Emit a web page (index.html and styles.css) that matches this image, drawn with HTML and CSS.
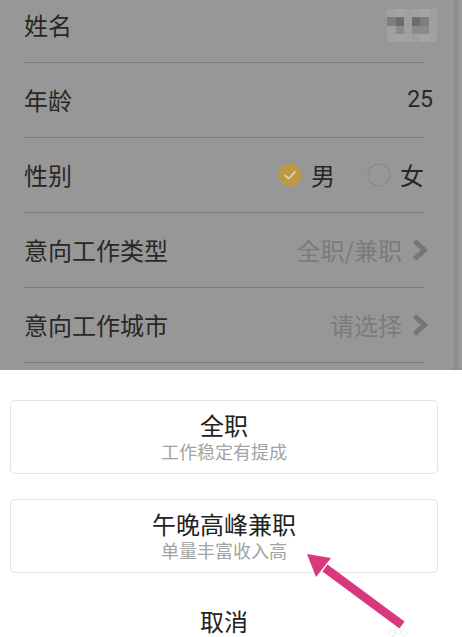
FILE: index.html
```html
<!DOCTYPE html>
<html lang="zh-CN">
<head>
<meta charset="utf-8">
<title>意向工作类型</title>
<link rel="stylesheet" href="styles.css">
</head>
<body>
<div class="screen">
  <section class="list">
    <div class="rows">
      <div class="row">
        <span class="label">姓名</span>
        <div class="blur">
          <i class="c1"></i><i class="c2"></i><i class="c3"></i><i class="c1"></i><i class="c2"></i><i class="c3"></i>
          <i class="d2"></i><i class="d1"></i><i class="c3"></i><i class="d1"></i><i class="d2"></i><i class="c4"></i>
          <i class="c4"></i><i class="d3"></i><i class="c3"></i><i class="d3"></i><i class="d3"></i><i class="c4"></i>
          <i class="c1"></i><i class="c2"></i><i class="c1"></i><i class="c3"></i><i class="c2"></i><i class="c1"></i>
        </div>
      </div>
      <div class="row">
        <span class="label">年龄</span>
        <span class="value num">25</span>
      </div>
      <div class="row">
        <span class="label">性别</span>
        <div class="gender">
          <span class="radio on"><svg viewBox="0 0 24 24" width="24" height="24"><circle cx="12" cy="12" r="11.5" fill="#bb9a43"/><path d="M7 12.3 L10.6 15.6 L17 8.8" fill="none" stroke="#ddd3b4" stroke-width="1.8" stroke-linecap="round" stroke-linejoin="round"/></svg></span>
          <span class="opt">男</span>
          <span class="radio off"><svg viewBox="0 0 24 24" width="24" height="24"><circle cx="12" cy="12" r="11" fill="none" stroke="#898989" stroke-width="1.2"/></svg></span>
          <span class="opt">女</span>
        </div>
      </div>
      <div class="row">
        <span class="label">意向工作类型</span>
        <div class="pick">
          <span class="hint">全职/兼职</span>
          <svg class="chev" viewBox="0 0 16 22" width="16" height="22"><path d="M2.5 2 L12.5 11 L2.5 20" fill="none" stroke="#767676" stroke-width="5"/></svg>
        </div>
      </div>
      <div class="row">
        <span class="label">意向工作城市</span>
        <div class="pick">
          <span class="hint">请选择</span>
          <svg class="chev" viewBox="0 0 16 22" width="16" height="22"><path d="M2.5 2 L12.5 11 L2.5 20" fill="none" stroke="#767676" stroke-width="5"/></svg>
        </div>
      </div>
      <div class="row"></div>
    </div>
    <div class="scrollbar"></div>
  </section>

  <section class="sheet">
    <div class="card">
      <div class="title">全职</div>
      <div class="sub">工作稳定有提成</div>
    </div>
    <div class="card">
      <div class="title">午晚高峰兼职</div>
      <div class="sub">单量丰富收入高</div>
    </div>
    <div class="cancel">取消</div>

    <svg class="arrow" viewBox="0 0 120 90" width="120" height="90">
      <line x1="97" y1="83" x2="20" y2="26" stroke="#d9387f" stroke-width="8.5"/>
      <polygon points="2,12 26,16 11,35" fill="#d9387f"/>
    </svg>
    <svg class="mark" viewBox="0 0 24 12" width="24" height="12">
      <circle cx="6" cy="6" r="3" fill="none" stroke="#ececec" stroke-width="1"/>
      <circle cx="12" cy="4" r="3" fill="none" stroke="#ececec" stroke-width="1"/>
      <circle cx="18" cy="6" r="3" fill="none" stroke="#ececec" stroke-width="1"/>
    </svg>
  </section>
</div>
</body>
</html>
```
FILE: styles.css
```css
html, body {
  margin: 0;
  padding: 0;
  background: #ffffff;
}

body {
  width: 462px;
  height: 637px;
  overflow: hidden;
  font-family: "Noto Sans CJK SC", "Noto Sans", sans-serif;
  color: #262626;
}

.screen {
  display: flex;
  flex-direction: column;
  height: 637px;
}

.list {
  position: relative;
  height: 370px;
  background: #979797;
  overflow: hidden;
  flex: none;
}

.rows {
  margin-top: -12px;
  display: flex;
  flex-direction: column;
}

.row {
  margin: 0 38px 0 24px;
  height: 74px;
  border-bottom: 1px solid #7c7c7c;
  display: flex;
  align-items: center;
  justify-content: space-between;
  flex: none;
}

.label {
  font-size: 24px;
  line-height: 30px;
  color: #272727;
}

.value {
  font-size: 24px;
  line-height: 30px;
  color: #272727;
  margin-right: -9px;
}

.num {
  font-family: "Roboto", "Noto Sans", sans-serif;
  font-size: 23px;
}

.blur {
  display: grid;
  grid-template-columns: repeat(6, 8.3px);
  grid-template-rows: repeat(4, 8.3px);
  margin-right: -13px;
  margin-top: 1px;
  filter: blur(0.6px);
}

.blur i { display: block; }
.blur .c1 { background: #a2a2a2; }
.blur .c2 { background: #a5a5a5; }
.blur .c3 { background: #9f9f9f; }
.blur .c4 { background: #a0a0a0; }
.blur .d1 { background: #6d6d6d; }
.blur .d2 { background: #7e7e7e; }
.blur .d3 { background: #8a8a8a; }

.gender {
  display: flex;
  align-items: center;
}

.radio {
  display: flex;
  width: 24px;
  height: 24px;
}

.opt {
  font-size: 24px;
  line-height: 30px;
  color: #272727;
  margin-left: 9px;
}

.radio.off {
  margin-left: 32px;
}

.pick {
  display: flex;
  align-items: center;
  margin-right: -4px;
}

.hint {
  font-size: 24px;
  line-height: 30px;
  color: #7b7b7b;
}

.chev {
  margin-left: 10px;
  display: block;
}

.scrollbar {
  position: absolute;
  top: 0;
  bottom: 0;
  left: 454px;
  width: 4px;
  background: #8d8d8d;
}

.sheet {
  position: relative;
  flex: 1;
  background: #ffffff;
  padding: 30px 24px 0 10px;
  display: flex;
  flex-direction: column;
}

.card {
  height: 72px;
  border: 1px solid #e3e3e3;
  border-radius: 5px;
  display: flex;
  flex-direction: column;
  align-items: center;
  justify-content: center;
  margin-bottom: 25px;
}

.title {
  font-size: 24px;
  line-height: 26px;
  color: #222222;
}

.sub {
  margin-top: 2px;
  font-size: 18px;
  line-height: 22px;
  color: #a3a3a3;
}

.cancel {
  margin-top: 3px;
  text-align: center;
  font-size: 24px;
  line-height: 40px;
  color: #222222;
}

.arrow {
  position: absolute;
  left: 305px;
  top: 172px;
}

.mark {
  position: absolute;
  left: 386px;
  top: 257px;
}
```
